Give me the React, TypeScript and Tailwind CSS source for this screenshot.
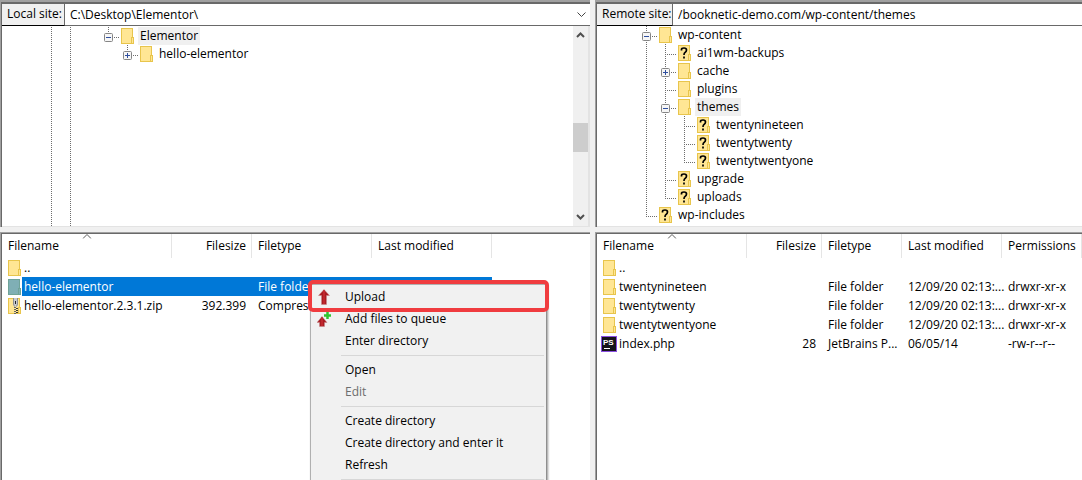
import type { ReactNode } from 'react';

type Guide = 'v' | 'tee' | 'end' | 'blank' | 'minus' | 'plus' | 'minus-end' | 'plus-end';
type IconKind = 'folder' | 'unknown' | 'zip' | 'php' | 'selected';

interface TreeNode {
  name: string;
  guides: Guide[];
  icon: IconKind;
  selected?: boolean;
}

interface Column {
  label: string;
  width: string;
  right?: boolean;
}

interface FileRow {
  icon: IconKind;
  cells: string[];
  selected?: boolean;
}

const LOCAL_TREE: TreeNode[] = [
  { name: 'Elementor', guides: ['v', 'v', 'blank', 'minus-end'], icon: 'folder', selected: true },
  { name: 'hello-elementor', guides: ['v', 'v', 'blank', 'blank', 'plus-end'], icon: 'folder' },
];

const REMOTE_TREE: TreeNode[] = [
  { name: 'wp-content', guides: ['minus'], icon: 'folder' },
  { name: 'ai1wm-backups', guides: ['v', 'tee'], icon: 'unknown' },
  { name: 'cache', guides: ['v', 'plus'], icon: 'folder' },
  { name: 'plugins', guides: ['v', 'tee'], icon: 'folder' },
  { name: 'themes', guides: ['v', 'minus'], icon: 'folder', selected: true },
  { name: 'twentynineteen', guides: ['v', 'v', 'tee'], icon: 'unknown' },
  { name: 'twentytwenty', guides: ['v', 'v', 'tee'], icon: 'unknown' },
  { name: 'twentytwentyone', guides: ['v', 'v', 'end'], icon: 'unknown' },
  { name: 'upgrade', guides: ['v', 'tee'], icon: 'unknown' },
  { name: 'uploads', guides: ['v', 'end'], icon: 'unknown' },
  { name: 'wp-includes', guides: ['end'], icon: 'unknown' },
];

const LOCAL_COLUMNS: Column[] = [
  { label: 'Filename', width: 'w-[170px]' },
  { label: 'Filesize', width: 'w-[80px]', right: true },
  { label: 'Filetype', width: 'w-[120px]' },
  { label: 'Last modified', width: 'w-[120px]' },
];

const REMOTE_COLUMNS: Column[] = [
  { label: 'Filename', width: 'w-[150px]' },
  { label: 'Filesize', width: 'w-[75px]', right: true },
  { label: 'Filetype', width: 'w-[80px]' },
  { label: 'Last modified', width: 'w-[100px]' },
  { label: 'Permissions', width: 'w-[80px]' },
];

const LOCAL_FILES: FileRow[] = [
  { icon: 'folder', cells: ['..', '', '', ''] },
  { icon: 'selected', cells: ['hello-elementor', '', 'File folder', ''], selected: true },
  { icon: 'zip', cells: ['hello-elementor.2.3.1.zip', '392.399', 'Compressed', ''] },
];

const REMOTE_FILES: FileRow[] = [
  { icon: 'folder', cells: ['..', '', '', '', ''] },
  { icon: 'folder', cells: ['twentynineteen', '', 'File folder', '12/09/20 02:13:...', 'drwxr-xr-x'] },
  { icon: 'folder', cells: ['twentytwenty', '', 'File folder', '12/09/20 02:13:...', 'drwxr-xr-x'] },
  { icon: 'folder', cells: ['twentytwentyone', '', 'File folder', '12/09/20 02:13:...', 'drwxr-xr-x'] },
  { icon: 'php', cells: ['index.php', '28', 'JetBrains P...', '06/05/14', '-rw-r--r--'] },
];

function FileIcon({ kind }: { kind: IconKind }) {
  if (kind === 'php') {
    return (
      <svg width="16" height="16" viewBox="0 0 16 16" className="-ml-0.5 shrink-0">
        <rect x="0.5" y="0.5" width="15" height="15" fill="#15131a" stroke="#8a4fe0" />
        <text x="2" y="9" fontSize="8" fontWeight="700" fill="#fff" fontFamily="Liberation Sans, sans-serif">
          PS
        </text>
        <path d="M3 12.5h6" stroke="#fff" />
      </svg>
    );
  }

  const fill = kind === 'selected' ? '#7fafb5' : '#ffe694';
  const stroke = kind === 'selected' ? '#6fa398' : '#e8c54c';

  return (
    <svg width="14" height="16" viewBox="0 0 14 16" className="shrink-0">
      <rect x="0.5" y="0.5" width="11" height="15" fill={fill} stroke={stroke} />
      <rect x="10.5" y="9.5" width="2" height="6" fill={fill} stroke={stroke} />
      {kind === 'unknown' && (
        <path
          d="M3.5 5.5V4.5Q3.5 3 6 3T8.5 5Q8.5 6.5 7 7.5Q6 8 6 10M6 11.5V13.5"
          fill="none"
          stroke="#000"
          strokeWidth="1.7"
        />
      )}
      {kind === 'zip' && (
        <>
          <path d="M5 0H10V6L9 8.5H6L5 6Z" fill="#c9cbce" />
          <path d="M5.5 0V6L6.5 8.5M9.5 0V6L8.5 8.5" fill="none" stroke="#8d8f92" />
          <rect x="7" y="3" width="1" height="3" fill="#222" />
          <path d="M7 9V16" stroke="#666" strokeWidth="2" strokeDasharray="1 1" />
          <path d="M9 10V16" stroke="#333" strokeWidth="2" strokeDasharray="1 1" />
        </>
      )}
    </svg>
  );
}

function GuideCell({ guide }: { guide: Guide }) {
  const box = guide.startsWith('minus') || guide.startsWith('plus');
  const last = guide.endsWith('end');
  return (
    <svg width="19" height="18" viewBox="0 0 19 18" className="shrink-0 overflow-visible">
      {guide !== 'blank' && (
        <path d={last ? 'M9.5 0V11' : 'M9.5 0V18'} stroke="#6d6d6d" strokeDasharray="1 1" />
      )}
      {guide !== 'blank' && guide !== 'v' && (
        <path d="M9 10.5H21" stroke="#6d6d6d" strokeDasharray="1 1" />
      )}
      {box && (
        <>
          <rect x="5.5" y="6.5" width="8" height="8" rx="1" fill="#f6f6f6" stroke="#858585" />
          <path d="M7 10.5H12" stroke="#2f4f9f" />
          {guide.startsWith('plus') && <path d="M9.5 8V13" stroke="#2f4f9f" />}
        </>
      )}
    </svg>
  );
}

function Tree({ nodes, children }: { nodes: TreeNode[]; children?: ReactNode }) {
  return (
    <div className="flex min-w-0 flex-1 flex-col">
      <ul>
        {nodes.map((n) => (
          <li key={n.name} className="flex h-[18px] items-center pl-10">
            {n.guides.map((g, i) => (
              <GuideCell key={i} guide={g} />
            ))}
            <span className="ml-[3px] flex">
              <FileIcon kind={n.icon} />
            </span>
            <span className={`ml-[3px] px-0.5 leading-[18px] ${n.selected ? 'bg-[#f0f0f0]' : ''}`}>
              {n.name}
            </span>
          </li>
        ))}
      </ul>
      {children}
    </div>
  );
}

function FileTable({ columns, rows }: { columns: Column[]; rows: FileRow[] }) {
  return (
    <div className="flex-1 overflow-hidden border-t border-l border-[#a0a0a0]">
      <div className="h-full border-t border-l border-[#696969] bg-white">
        <table className="w-0 table-fixed border-separate border-spacing-0">
          <thead>
            <tr className="h-6">
              {columns.map((c, i) => (
                <th
                  key={c.label}
                  className={`relative border-r border-[#e5e5e5] py-0 pl-1.5 font-normal whitespace-nowrap ${c.width} ${c.right ? 'pr-[5px] text-right' : 'text-left'}`}
                >
                  {c.label}
                  {i === 0 && (
                    <svg width="9" height="5" viewBox="0 0 9 5" className="absolute top-0 left-1/2 -translate-x-1/2">
                      <path d="M0.5 4.5L4.5 0.5L8.5 4.5" fill="none" stroke="#5c5c5c" />
                    </svg>
                  )}
                </th>
              ))}
            </tr>
          </thead>
          <tbody>
            {rows.map((r) => (
              <tr key={r.cells[0]} className="h-[19px]">
                {r.cells.map((cell, i) =>
                  i === 0 ? (
                    <td key={i} className="p-0">
                      <div className="flex items-center pl-1.5">
                        <FileIcon kind={r.icon} />
                        <span
                          className={`h-[19px] flex-1 px-0.5 leading-[19px] whitespace-nowrap ${r.selected ? 'bg-[#0078d7] text-white' : ''}`}
                        >
                          {cell}
                        </span>
                      </div>
                    </td>
                  ) : (
                    <td
                      key={i}
                      className={`py-0 pl-1.5 leading-[19px] whitespace-nowrap ${columns[i].right ? 'pr-1.5 text-right' : 'pr-0'} ${r.selected ? 'bg-[#0078d7] text-white' : ''}`}
                    >
                      {cell}
                    </td>
                  )
                )}
              </tr>
            ))}
          </tbody>
        </table>
      </div>
    </div>
  );
}

function Frame({ children }: { children: ReactNode }) {
  return (
    <div className="border-t-2 border-l border-[#a0a0a0]">
      <div className="border-t-2 border-l border-[#696969] bg-white">{children}</div>
    </div>
  );
}

function UploadIcon() {
  return (
    <svg width="12" height="16" viewBox="0 0 12 16">
      <path d="M6 0.5L11.5 6.5H8.5V15.5H3.5V6.5H0.5Z" fill="#a81c22" stroke="#c9888b" strokeWidth="0.5" />
      <path d="M6 1.5V15" stroke="#c0272d" strokeWidth="2" />
    </svg>
  );
}

function QueueIcon() {
  return (
    <svg width="14" height="16" viewBox="0 0 14 16">
      <path d="M5 5.5L10 11.5H7.5V15.5H2.5V11.5H0Z" fill="#a81c22" stroke="#c9888b" strokeWidth="0.5" />
      <path d="M5 6.5V15" stroke="#c0272d" strokeWidth="2" />
      <path d="M10.5 1V8M7 4.5H14" stroke="#2fc52f" strokeWidth="2.5" />
    </svg>
  );
}

interface MenuItemProps {
  label: string;
  icon?: ReactNode;
  disabled?: boolean;
  highlight?: boolean;
}

function MenuItem({ label, icon, disabled, highlight }: MenuItemProps) {
  return (
    <button
      type="button"
      role="menuitem"
      disabled={disabled}
      className="relative flex h-[22px] w-full items-center text-left disabled:text-[#6d6d6d]"
    >
      <span className="mr-2 flex w-[26px] items-center justify-center">{icon}</span>
      {label}
      {highlight && (
        <span className="pointer-events-none absolute -inset-x-[3px] -top-1.5 -bottom-1 rounded-[5px] border-4 border-[#f03c3f]" />
      )}
    </button>
  );
}

function MenuSeparator() {
  return <div role="separator" className="my-[3px] mr-0.5 ml-[30px] h-px bg-[#d7d7d7]" />;
}

function ContextMenu() {
  return (
    <div
      role="menu"
      className="absolute top-[284px] left-[310px] w-[237px] border border-[#b0b0b0] border-r-[#8f8f8f] bg-[#f1f1f1] pt-px shadow-[1px_1px_2px_#00000066]"
    >
      <MenuItem label="Upload" icon={<UploadIcon />} highlight />
      <MenuItem label="Add files to queue" icon={<QueueIcon />} />
      <MenuItem label="Enter directory" />
      <MenuSeparator />
      <MenuItem label="Open" />
      <MenuItem label="Edit" disabled />
      <MenuSeparator />
      <MenuItem label="Create directory" />
      <MenuItem label="Create directory and enter it" />
      <MenuItem label="Refresh" />
      <MenuSeparator />
    </div>
  );
}

export default function App() {
  return (
    <div className="relative grid h-screen grid-cols-[590fr_487fr] gap-[5px] overflow-hidden bg-[#f0f0f0] font-['Open_Sans','Noto_Sans',sans-serif] text-[12px] leading-4 text-black">
      {/* Local side */}
      <section className="flex min-w-0 flex-col gap-[5px]">
        <Frame>
          <div className="flex h-[22px] border-b border-[#696969]">
            <label
              htmlFor="local"
              className="-mb-px w-[63px] border-r border-b border-r-[#696969] border-b-black bg-[#f0f0f0] pl-[5px] leading-5 whitespace-nowrap"
            >
              Local site:
            </label>
            <div className="relative flex-1">
              <select id="local" className="h-full w-full appearance-none bg-white pl-[5px] outline-none">
                <option>C:\Desktop\Elementor\</option>
              </select>
              <svg width="9" height="6" viewBox="0 0 9 6" className="pointer-events-none absolute top-2 right-1">
                <path d="M0.5 0.5L4.5 4.5L8.5 0.5" fill="none" stroke="#444" />
              </svg>
            </div>
          </div>
          <div className="flex h-[201px] border-r-2 border-b border-[#e3e3e3] pt-px">
            <Tree nodes={LOCAL_TREE}>
              <div className="flex flex-1 pl-10">
                {[0, 1].map((i) => (
                  <svg key={i} width="19" height="100%" className="shrink-0">
                    <path d="M9.5 0V400" stroke="#6d6d6d" strokeDasharray="1 1" />
                  </svg>
                ))}
              </div>
            </Tree>
            <div className="-mt-px flex w-[15px] flex-col items-center bg-[#f0f0f0] py-1.5">
              <svg width="9" height="6" viewBox="0 0 9 6">
                <path d="M1 5L4.5 1.5L8 5" fill="none" stroke="#505050" strokeWidth="2" />
              </svg>
              <div className="mt-[85px] h-[29px] w-full bg-[#cdcdcd]" />
              <svg width="9" height="6" viewBox="0 0 9 6" className="mt-auto">
                <path d="M1 1L4.5 4.5L8 1" fill="none" stroke="#505050" strokeWidth="2" />
              </svg>
            </div>
          </div>
        </Frame>
        <FileTable columns={LOCAL_COLUMNS} rows={LOCAL_FILES} />
      </section>

      {/* Remote side */}
      <section className="flex min-w-0 flex-col gap-[5px]">
        <Frame>
          <div className="flex h-[22px] border-b border-[#696969]">
            <label
              htmlFor="remote"
              className="-mb-px w-[76px] border-r border-b border-r-[#696969] border-b-black bg-[#f0f0f0] pl-[5px] leading-5 whitespace-nowrap"
            >
              Remote site:
            </label>
            <input
              id="remote"
              defaultValue="/booknetic-demo.com/wp-content/themes"
              className="min-w-0 flex-1 bg-white pl-[5px] outline-none"
            />
          </div>
          <div className="flex h-[201px] border-b border-[#e3e3e3]">
            <Tree nodes={REMOTE_TREE} />
          </div>
        </Frame>
        <FileTable columns={REMOTE_COLUMNS} rows={REMOTE_FILES} />
      </section>

      <ContextMenu />
    </div>
  );
}
